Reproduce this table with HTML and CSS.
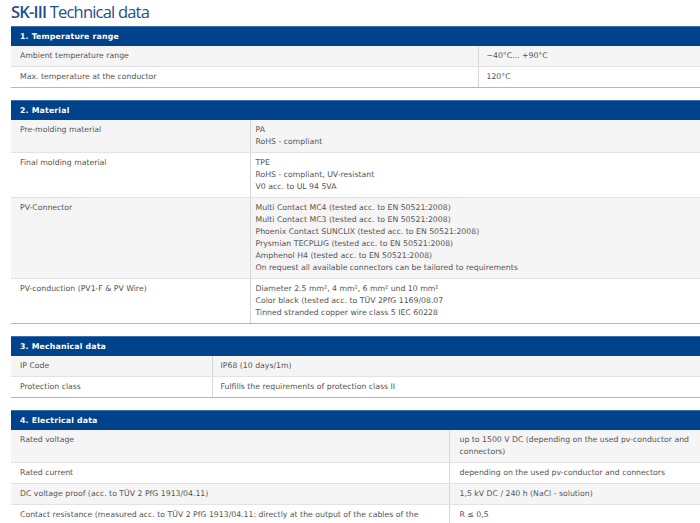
FILE: index.html
```html
<!DOCTYPE html>
<html>
<head>
<meta charset="utf-8">
<link rel="stylesheet" href="styles.css">
</head>
<body>
<h1 class="title"><b>SK-III</b> Technical data</h1>

<table class="spec spec-temp">
  <colgroup><col class="c1"><col class="c2"></colgroup>
  <thead><tr><th colspan="2">1. Temperature range</th></tr></thead>
  <tbody>
    <tr><td>Ambient temperature range</td><td>−40°C... +90°C</td></tr>
    <tr><td>Max. temperature at the conductor</td><td>120°C</td></tr>
  </tbody>
</table>

<table class="spec spec-mat">
  <colgroup><col class="c1"><col class="c2"></colgroup>
  <thead><tr><th colspan="2">2. Material</th></tr></thead>
  <tbody>
    <tr><td>Pre-molding material</td><td>PA<br>RoHS - compliant</td></tr>
    <tr><td>Final molding material</td><td>TPE<br>RoHS - compliant, UV-resistant<br>V0 acc. to UL 94 5VA</td></tr>
    <tr><td>PV-Connector</td><td>Multi Contact MC4 (tested acc. to EN 50521:2008)<br>Multi Contact MC3 (tested acc. to EN 50521:2008)<br>Phoenix Contact SUNCLIX (tested acc. to EN 50521:2008)<br>Prysmian TECPLUG (tested acc. to EN 50521:2008)<br>Amphenol H4 (tested acc. to EN 50521:2008)<br>On request all available connectors can be tailored to requirements</td></tr>
    <tr><td>PV-conduction (PV1-F &amp; PV Wire)</td><td>Diameter 2.5 mm², 4 mm², 6 mm² und 10 mm²<br>Color black (tested acc. to TÜV 2PfG 1169/08.07<br>Tinned stranded copper wire class 5 IEC 60228</td></tr>
  </tbody>
</table>

<table class="spec spec-mech">
  <colgroup><col class="c1"><col class="c2"></colgroup>
  <thead><tr><th colspan="2">3. Mechanical data</th></tr></thead>
  <tbody>
    <tr><td>IP Code</td><td>IP68 (10 days/1m)</td></tr>
    <tr><td>Protection class</td><td>Fulfills the requirements of protection class II</td></tr>
  </tbody>
</table>

<table class="spec spec-elec">
  <colgroup><col class="c1"><col class="c2"></colgroup>
  <thead><tr><th colspan="2">4. Electrical data</th></tr></thead>
  <tbody>
    <tr><td>Rated voltage</td><td>up to 1500 V DC (depending on the used pv-conductor and<br>connectors)</td></tr>
    <tr><td>Rated current</td><td>depending on the used pv-conductor and connectors</td></tr>
    <tr><td>DC voltage proof (acc. to TÜV 2 PfG 1913/04.11)</td><td>1,5 kV DC / 240 h (NaCl - solution)</td></tr>
    <tr><td>Contact resistance (measured acc. to TÜV 2 PfG 1913/04.11: directly at the output of the cables of the connector)</td><td>R ≤ 0,5</td></tr>
  </tbody>
</table>
</body>
</html>
```

FILE: styles.css
```css
html, body {
  margin: 0;
  padding: 0;
  background: #ffffff;
}
body {
  padding-left: 11px;
  font-family: "DejaVu Sans", Verdana, sans-serif;
  overflow: hidden;
}
.title {
  margin: 0;
  height: 26px;
  font-family: "Open Sans", "Liberation Sans", sans-serif;
  font-weight: 400;
  font-size: 16.5px;
  line-height: 24px;
  letter-spacing: -0.8px;
  color: #1d4f88;
}
.title b {
  font-weight: 600;
}
.spec {
  width: 689px;
  border-collapse: collapse;
  table-layout: fixed;
  margin-bottom: 12px;
  font-size: 7.75px;
  color: #555;
}
.spec th {
  background: #00438a;
  border-top: 1px solid #3a72b0;
  color: #fff;
  font-weight: bold;
  text-align: left;
  height: 19px;
  padding: 0 9px;
  letter-spacing: 0.2px;
}
.spec td {
  vertical-align: top;
  padding: 4px 8px 4px 9px;
  line-height: 12px;
  border-bottom: 1px solid #e2e2e2;
}
.spec td + td {
  border-left: 1px solid #d6d6d6;
  padding-left: 8px;
}
.spec tbody tr:nth-child(odd) td {
  background: #f5f5f5;
}
.spec tbody tr:last-child td {
  border-bottom: 1px solid #b5b5b5;
}
.spec-temp .c1 { width: 467px; }
.spec-mat .c1 { width: 239px; }
.spec-mat td + td { padding-left: 5px; }
.spec-mech .c1 { width: 201px; }
.spec-elec .c1 { width: 438px; }
.spec-elec td + td { padding-left: 10px; }
```
